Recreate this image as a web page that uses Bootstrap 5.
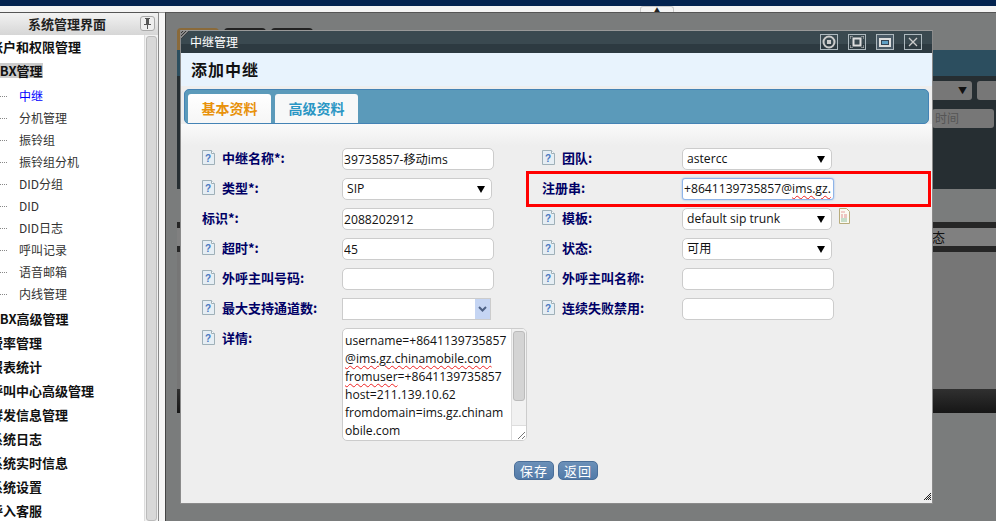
<!DOCTYPE html>
<html lang="zh">
<head>
<meta charset="utf-8">
<title>添加中继</title>
<link href="https://cdn.jsdelivr.net/npm/bootstrap@5.3.0/dist/css/bootstrap.min.css" rel="stylesheet">
<style>
html,body{height:521px;overflow:hidden;background:#f4f4f4}
body{font-family:"Open Sans","Noto Sans CJK SC",sans-serif;font-size:12px;color:#222}
.topband{height:6px;background:#03234f}
.topgap{height:6px;background:#f4f4f4;padding-left:640px}
.tabnub{width:34px;height:6px;background:#f4f4f4;border:1px solid #ccc;border-bottom:0;border-radius:3px 3px 0 0;color:#222;font-size:6px;line-height:6px;text-align:center}
.shell{height:509px}
.leftpane{width:159px;flex:none;border-top:1px solid #555;border-right:1px solid #888;background:#fff;overflow:hidden}
.panehead{height:22px;background:linear-gradient(#f2f2f2,#d6d6d6);font:bold 13px "Noto Sans CJK SC",sans-serif;color:#222;padding:0 3px 2px 28px}
.pin{width:15px;height:15px;border:1px solid #aaa;border-radius:3px;background:#eee;margin-left:auto}
.menuwrap{height:487px}
.menulist{flex:1;min-width:0;overflow:hidden}
.topitem{height:24px;font:bold 13px/24px "Noto Sans CJK SC",sans-serif;color:#111;white-space:nowrap}
.clipa{margin-left:-10px}
.clipb{margin-left:-9px}
.topsel{background:#ccc;display:inline-block;line-height:15px}
.subgroup{padding:2px 0}
.subitem{height:22px;line-height:22px;font-family:"Noto Sans CJK SC",sans-serif;font-size:12px;color:#333;padding-left:19px;white-space:nowrap;background:repeating-linear-gradient(90deg,#888 0 1px,transparent 1px 2px) 0 11px/7px 1px no-repeat}
.subitem.cur{color:#00f}
.paneBar{width:14px;flex:none;background:#f1f1f1;border-left:1px solid #ddd;padding:1px 1px}
.paneThumb{height:100%;background:#d8d8d8;border:1px solid #bbb;border-radius:3px}
.gutter{width:6px;flex:none;background:#f6f6f6;border-top:1px solid #999}
.mainpane{flex:1;min-width:0;position:relative;border-top:1px solid #555;border-left:1px solid #444;background:#7a7c7c;overflow:hidden}
.under{margin-left:11px;padding-top:15px}
.upeeks{height:22px;gap:5px}
.upeek{width:42px;height:22px;background:#222;border-radius:4px 4px 0 0}
.upeek.first{background:#8a6a3a}
.ubar1{height:26px;background:#2c4e5f}
.ubar2{height:113px;background:#262e32;padding:5px 0 0 755px}
.ufrow{gap:5px;margin-bottom:9px}
.ufield{height:19px;background:#777;border-radius:3px;color:#555;padding:0 3px;line-height:19px;flex:none}
.ufield.w1{width:40px;text-align:right;border-radius:0 3px 3px 0;color:#111;font-size:9px;padding-right:5px}
.ufield.w2{width:30px;border-radius:3px 0 0 3px}
.ufield.w3{width:62px}
.ublank{height:33px}
.ubar3{height:6px;background:#262626}
.urow{height:18px;background:#808080;color:#111;padding-left:755px;font-size:13px;line-height:18px;font-family:"Noto Sans CJK SC",sans-serif}
.ubar4{height:137px;background:#767676}
.ubar5{height:24px;background:linear-gradient(#303030,#161616)}
.winbox{position:absolute;left:14px;top:17px;width:753px;height:474px;background:#eee;border:1px solid #8a8a8a;border-top-color:#999}
.wintitle{height:22px;background:linear-gradient(#3a4950 60%,#2d3a41 60%);color:#fff;font:12px/22px "Noto Sans CJK SC",sans-serif;padding:0 10px 0 9px;position:relative}
.corner{position:absolute;left:0;top:0;width:8px;height:8px;background:repeating-linear-gradient(135deg,#888 0 1px,#333 1px 2px);clip-path:polygon(0 0,100% 0,0 100%)}
.wbtns{margin-left:auto;gap:10px}
.wbtn{width:18px;height:16px;border:1px solid #aeb9bf;display:flex;align-items:center;justify-content:center}
.wbtn.darkb{background:#4a5a66}
.winhead{height:33px;background:#e8f3fd;font:bold 16px/33px "Noto Sans CJK SC",sans-serif;color:#111;padding-left:10px;letter-spacing:1px}
.tabstrip{height:35px;margin:3px 3px 0 3px;background:#5b9aba;border:1px solid #4483b5;border-radius:5px;padding:4px 0 0 3px;gap:4px;align-items:flex-end}
.tabcell{width:83px;height:29px;background:#fff;border-radius:3px 3px 0 0;text-align:center;font:bold 14px/28px "Noto Sans CJK SC",sans-serif;text-decoration:none}
.tabcell.on{color:#e8920c;background:linear-gradient(#fff,#f6f6f6)}
.tabcell.off{color:#2a96c4;background:#f7f8f8}
.formzone{height:379px;background:linear-gradient(#fafafa,#eee 22px);padding:24px 0 0 21px;position:relative}
.fcols{gap:48px}
.fcol{width:292px}
.frow{height:30px;margin:0}
.frow.tall{height:122px}
.lab{width:140px;flex:none;height:20px;font:bold 13px/20px "Noto Sans CJK SC",sans-serif;color:#000066;white-space:nowrap;align-items:center;gap:7px}
.lab svg{flex:none;margin-top:-2px}
.inp.form-control,.sel.form-select,.fake{height:22px;min-height:22px;padding:0 1px;border:1px solid #ccc;border-radius:5px;font-family:"Open Sans","Noto Sans CJK SC",sans-serif;font-size:12.15px;line-height:20px;color:#111;box-shadow:none;background-color:#fff}
.inp.form-control{width:152px;flex:none}
.sel.form-select{width:150px;flex:none;padding-left:4px;background-image:url("data:image/svg+xml,%3Csvg xmlns='http://www.w3.org/2000/svg' width='8' height='7'%3E%3Cpath d='M0 0h8L4 7z' fill='%23000'/%3E%3C/svg%3E");background-size:8px 7px;background-position:right 6px center}
.sel.combo{border-radius:0;width:149px;background-image:url("data:image/svg+xml,%3Csvg xmlns='http://www.w3.org/2000/svg' width='15' height='20'%3E%3Crect width='15' height='20' fill='%23c5d5f3'/%3E%3Cpath d='M4 8l3.500 3.500L11 8' fill='none' stroke='%234d6185' stroke-width='2'/%3E%3C/svg%3E");background-size:15px 20px;background-position:right 0 center}
.fake{width:152px;flex:none;white-space:nowrap;overflow:hidden}
.fake.focusd{border:1px solid #8fb4e8;box-shadow:0 0 2px #8fb4e8;border-radius:3px}
.sq{text-decoration:underline wavy #e22;text-decoration-thickness:1px;text-underline-offset:2px}
.tarea{width:185px;height:113px;background:#fff;border:1px solid #ccc;border-radius:5px;overflow:hidden;flex:none}
.tatext{flex:1;min-width:0;padding:3px 2px;font-size:12.15px;line-height:18px;white-space:nowrap;color:#111}
.tabar{width:15px;flex:none;background:#f1f1f1;border-left:1px solid #ddd;flex-direction:column}
.tathumb{height:70px;margin:2px 1px 0;background:#d4d4d4;border:1px solid #bbb;border-radius:3px}
.tagrip{margin-top:auto;height:15px;background:#fff;border-top:1px solid #ddd;display:flex;justify-content:flex-end;align-items:flex-end}
.actbar{margin-top:11px;gap:4px;padding-left:312px}
.actbtn.btn{width:40px;height:19px;padding:0;font:13px/17px "Noto Sans CJK SC",sans-serif;color:#fff;border:1px solid #4a6e98;border-radius:5px;background:linear-gradient(#6b90b8,#527aa8);letter-spacing:1px}
.redbox{position:absolute;left:345px;top:47px;width:405px;height:36px;border:3px solid #f00}
.grip{position:absolute;right:1px;bottom:3px}
.tplicon{margin-left:6px;flex:none}
</style>
</head>
<body>
<div class="topband"></div>
<div class="topgap d-flex"><div class="tabnub">▲</div></div>
<div class="shell d-flex">
  <aside class="leftpane">
    <div class="panehead d-flex align-items-center"><span>系统管理界面</span>
      <span class="pin d-flex align-items-center justify-content-center"><svg width="9" height="11" viewBox="0 0 9 11"><path d="M2 0h5v1H6v5h2v1H5v4H4V7H1V6h2V1H2z" fill="#555"/></svg></span></div>
    <div class="menuwrap d-flex">
      <div class="menulist">
        <div class="topitem clipa">账户和权限管理</div>
        <div class="topitem clipb"><span class="topsel">PBX管理</span></div>
        <div class="subgroup">
          <div class="subitem cur">中继</div>
          <div class="subitem">分机管理</div>
          <div class="subitem">振铃组</div>
          <div class="subitem">振铃组分机</div>
          <div class="subitem">DID分组</div>
          <div class="subitem">DID</div>
          <div class="subitem">DID日志</div>
          <div class="subitem">呼叫记录</div>
          <div class="subitem">语音邮箱</div>
          <div class="subitem">内线管理</div>
        </div>
        <div class="topitem clipb">PBX高级管理</div>
        <div class="topitem clipa">费率管理</div>
        <div class="topitem clipa">报表统计</div>
        <div class="topitem clipa">呼叫中心高级管理</div>
        <div class="topitem clipa">群发信息管理</div>
        <div class="topitem clipa">系统日志</div>
        <div class="topitem clipa">系统实时信息</div>
        <div class="topitem clipa">系统设置</div>
        <div class="topitem clipa">呼入客服</div>
      </div>
      <div class="paneBar"><div class="paneThumb"></div></div>
    </div>
  </aside>
  <div class="gutter"></div>
  <main class="mainpane">
    <div class="under">
      <div class="upeeks d-flex"><div class="upeek first"></div><div class="upeek"></div><div class="upeek"></div></div>
      <div class="ubar1"></div>
      <div class="ubar2">
        <div class="ufrow d-flex"><div class="ufield w1">▼</div><div class="ufield w2"></div></div>
        <div class="ufrow d-flex"><div class="ufield w3">时间</div></div>
      </div>
      <div class="ublank"></div>
      <div class="ubar3"></div>
      <div class="urow">态</div>
      <div class="ubar3"></div>
      <div class="ubar4"></div>
      <div class="ubar5"></div>
    </div>

    <section class="winbox">
      <div class="wintitle d-flex align-items-center"><i class="corner"></i><span>中继管理</span>
        <div class="wbtns d-flex">
          <span class="wbtn"><svg width="14" height="14" viewBox="0 0 14 14"><circle cx="7" cy="7" r="5.500" fill="none" stroke="#ccc" stroke-width="2"/><rect x="5" y="5" width="4" height="4" fill="#ccc"/></svg></span>
          <span class="wbtn"><svg width="14" height="12" viewBox="0 0 14 12"><rect x="3.500" y="2.500" width="7" height="7" fill="none" stroke="#ddd" stroke-width="2"/><path d="M0 3V0h3M11 0h3v3M14 9v3h-3M3 12H0V9" fill="none" stroke="#ccc"/></svg></span>
          <span class="wbtn darkb"><svg width="12" height="9" viewBox="0 0 12 9"><rect width="12" height="9" fill="#ddd"/><rect x="2.500" y="2.500" width="7" height="4" fill="#5f9fc4" stroke="#345"/></svg></span>
          <span class="wbtn"><svg width="10" height="10" viewBox="0 0 10 10"><path d="M1 1l8 8M9 1l-8 8" stroke="#ccc" stroke-width="1.300"/></svg></span>
        </div>
      </div>
      <div class="winhead">添加中继</div>
      <nav class="tabstrip d-flex">
        <a class="tabcell on" href="#">基本资料</a>
        <a class="tabcell off" href="#">高级资料</a>
      </nav>
      <div class="formzone">
        <div class="fcols d-flex">
          <div class="fcol">
            <div class="frow d-flex align-items-start"><label class="lab d-flex"><svg width="13" height="15" viewBox="0 0 13 15"><use href="#docq"/></svg>中继名称*:</label><input class="inp form-control" value="39735857-移动ims"></div>
            <div class="frow d-flex align-items-start"><label class="lab d-flex"><svg width="13" height="15" viewBox="0 0 13 15"><use href="#docq"/></svg>类型*:</label><select class="sel form-select"><option>SIP</option></select></div>
            <div class="frow d-flex align-items-start"><label class="lab d-flex">标识*:</label><input class="inp form-control" value="2088202912"></div>
            <div class="frow d-flex align-items-start"><label class="lab d-flex"><svg width="13" height="15" viewBox="0 0 13 15"><use href="#docq"/></svg>超时*:</label><input class="inp form-control" value="45"></div>
            <div class="frow d-flex align-items-start"><label class="lab d-flex"><svg width="13" height="15" viewBox="0 0 13 15"><use href="#docq"/></svg>外呼主叫号码:</label><input class="inp form-control" value=""></div>
            <div class="frow d-flex align-items-start"><label class="lab d-flex"><svg width="13" height="15" viewBox="0 0 13 15"><use href="#docq"/></svg>最大支持通道数:</label><select class="sel form-select combo"><option></option></select></div>
            <div class="frow tall d-flex align-items-start"><label class="lab d-flex"><svg width="13" height="15" viewBox="0 0 13 15"><use href="#docq"/></svg>详情:</label>
              <div class="tarea d-flex">
                <div class="tatext">username=+8641139735857<br><span class="sq">@ims.gz.chinamobile.com</span><br><span class="sq">fromuser</span>=+8641139735857<br>host=211.139.10.62<br>fromdomain=ims.gz.chinam<br>obile.com</div>
                <div class="tabar d-flex"><div class="tathumb"></div><div class="tagrip"><svg width="9" height="9" viewBox="0 0 9 9"><path d="M1 8l7-7M5 8l3-3" stroke="#777"/></svg></div></div>
              </div>
            </div>
          </div>
          <div class="fcol">
            <div class="frow d-flex align-items-start"><label class="lab d-flex"><svg width="13" height="15" viewBox="0 0 13 15"><use href="#docq"/></svg>团队:</label><select class="sel form-select"><option>astercc</option></select></div>
            <div class="frow d-flex align-items-start"><label class="lab d-flex">注册串:</label><div class="fake focusd">+8641139735857@<span class="sq">ims.gz.</span></div></div>
            <div class="frow d-flex align-items-start"><label class="lab d-flex"><svg width="13" height="15" viewBox="0 0 13 15"><use href="#docq"/></svg>模板:</label><select class="sel form-select"><option>default sip trunk</option></select>
              <svg class="tplicon" width="13" height="16" viewBox="0 0 13 16"><path d="M1.500.500h7l3 3v12h-10z" fill="#fbfaf2" stroke="#b8ac7c"/><path d="M3 4h4" stroke="#e8a0a0"/><path d="M3 7h2M6 7h3M3 9h2M6 9h3" stroke="#e09090"/><path d="M3 11h6M3 13h6" stroke="#90c0a0"/></svg></div>
            <div class="frow d-flex align-items-start"><label class="lab d-flex"><svg width="13" height="15" viewBox="0 0 13 15"><use href="#docq"/></svg>状态:</label><select class="sel form-select"><option>可用</option></select></div>
            <div class="frow d-flex align-items-start"><label class="lab d-flex"><svg width="13" height="15" viewBox="0 0 13 15"><use href="#docq"/></svg>外呼主叫名称:</label><input class="inp form-control" value=""></div>
            <div class="frow d-flex align-items-start"><label class="lab d-flex"><svg width="13" height="15" viewBox="0 0 13 15"><use href="#docq"/></svg>连续失败禁用:</label><input class="inp form-control" value=""></div>
          </div>
        </div>
        <div class="actbar d-flex">
          <button class="actbtn btn" type="button">保存</button>
          <button class="actbtn btn" type="button">返回</button>
        </div>
        <div class="redbox"></div>
        <svg class="grip" width="8" height="8" viewBox="0 0 8 8"><defs><pattern id="hatch" width="2" height="2" patternUnits="userSpaceOnUse"><rect width="1" height="1" fill="#222"/><rect x="1" y="1" width="1" height="1" fill="#222"/></pattern></defs><path d="M0 8l8-8v8z" fill="url(#hatch)"/></svg>
      </div>
    </section>
  </main>
</div>
<svg width="0" height="0" class="d-none"><defs><g id="docq"><path d="M.500.500h9l3 3v11h-12z" fill="#e6eef4" stroke="#9fb0b8"/><path d="M9.500.500v3h3" fill="#fff" stroke="#9fb0b8"/><text x="6" y="11.500" font-size="10" font-weight="bold" font-family="Liberation Sans" text-anchor="middle" fill="#4a78c0">?</text></g></defs></svg>
</body>
</html>
